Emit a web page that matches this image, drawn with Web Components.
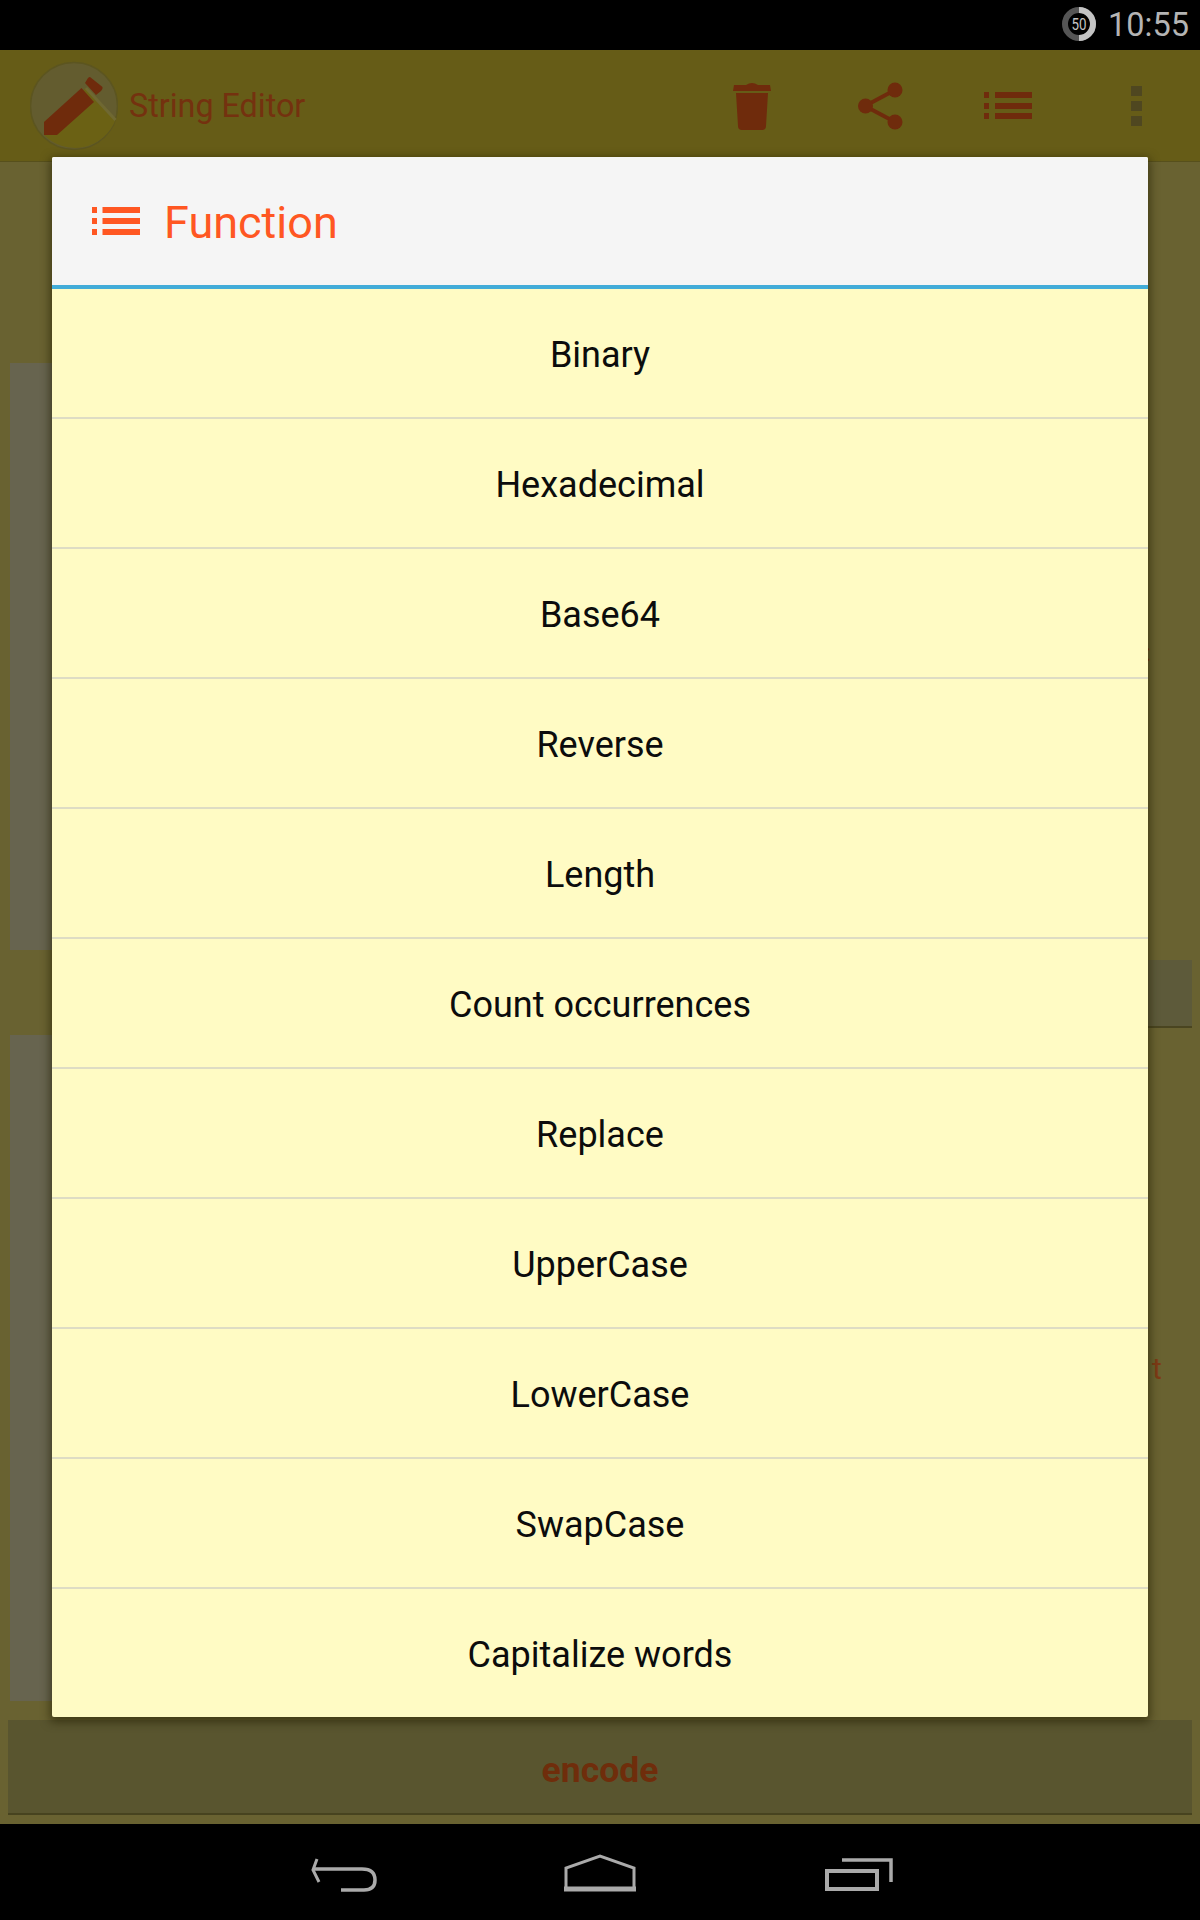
<!DOCTYPE html>
<html>
<head>
<meta charset="utf-8">
<title>String Editor</title>
<style>
    html, body { margin: 0; padding: 0; background: #000; }
    body { width: 1200px; height: 1920px; overflow: hidden; font-family: Roboto, "Liberation Sans", sans-serif; }
</style>
</head>
<body>
<app-screen>
    <status-bar slot="status" time="10:55"></status-bar>
    <app-bar slot="bar" title="String Editor"></app-bar>
    <editor-body slot="body"></editor-body>
    <nav-bar slot="nav"></nav-bar>
    <function-dialog slot="dialog" heading="Function">
        <option-row>Binary</option-row>
        <option-row>Hexadecimal</option-row>
        <option-row>Base64</option-row>
        <option-row>Reverse</option-row>
        <option-row>Length</option-row>
        <option-row>Count occurrences</option-row>
        <option-row>Replace</option-row>
        <option-row>UpperCase</option-row>
        <option-row>LowerCase</option-row>
        <option-row>SwapCase</option-row>
        <option-row>Capitalize words</option-row>
    </function-dialog>
</app-screen>

<script>
// Small helper so each component only declares its css and markup
class ShadowBase extends HTMLElement {
    constructor() {
        super();
        this.attachShadow({ mode: 'open' });
    }

    connectedCallback() {
        this.shadowRoot.innerHTML = `<style>${this.css()}</style>${this.html()}`;
    }

    css() { return ':host { display: block; }'; }
    html() { return '<slot></slot>'; }
}

class AppScreen extends ShadowBase {
    css() {
        return `
            :host { display: flex; flex-direction: column; position: relative; width: 1200px; height: 1920px; }
            ::slotted([slot="body"]) { flex: 1; }
        `;
    }
    html() {
        return `
            <slot name="status"></slot>
            <slot name="bar"></slot>
            <slot name="body"></slot>
            <slot name="nav"></slot>
            <slot name="dialog"></slot>
        `;
    }
}

class StatusBar extends ShadowBase {
    css() {
        return `
            :host { display: flex; align-items: center; justify-content: flex-end; gap: 12px; height: 50px; padding-right: 15px; background: #000; color: #b4b4b4; }
            svg { display: block; margin-top: -2px; }
            .time { font-size: 32.500px; line-height: 50px; width: 77px; white-space: nowrap; }
        `;
    }
    html() {
        return `
            <svg width="34" height="34" viewBox="0 0 34 34">
                <circle cx="17" cy="17" r="14" fill="none" stroke="#555" stroke-width="6"/>
                <path d="M17 3a14 14 0 0 1 0 28" fill="none" stroke="#c4c4c4" stroke-width="6"/>
                <text x="17" y="23" text-anchor="middle" font-size="16" fill="#c4c4c4" font-family="Roboto" textLength="15" lengthAdjust="spacingAndGlyphs">50</text>
            </svg>
            <span class="time">${this.getAttribute('time')}</span>
        `;
    }
}

class AppBar extends ShadowBase {
    css() {
        return `
            :host { display: flex; align-items: center; height: 112px; box-sizing: border-box; padding-left: 30px; background: #665c17; border-bottom: 1px solid #57501c; position: relative; }
            .logo { display: block; flex: none; margin-top: 1px; }
            .title { margin-left: 11px; font-size: 32.300px; color: #74310f; flex: 1; }
            .icons { display: flex; align-items: center; }
            svg { display: block; }
            .trash { margin-right: 87px; }
            .share { margin-right: 81px; }
            .list { margin-right: 99px; }
            .more { margin-right: 58px; }
        `;
    }
    html() {
        return `
            <svg class="logo" width="88" height="90" viewBox="30 61 88 90">
                <circle cx="74" cy="106" r="43.5" fill="#635c2f" stroke="#5c5520" stroke-width="1.5"/>
                <path d="M86 88 L115.500 120 A43.500 43.500 0 0 1 44 135 L44 122 Z" fill="#6b6114"/>
                <path d="M86 88 L115.500 120" stroke="#6f6832" stroke-width="3" fill="none"/>
                <path d="M44 122 L81.500 88 L94 102 L57 135 L44 135 Z" fill="#6f2b0c"/>
                <path d="M90 77 L102.500 87 Q103 89 101 91 L96 95 L85 83 L88 78 Q89 77 90 77 Z" fill="#6f2b0c"/>
            </svg>
            <span class="title">${this.getAttribute('title')}</span>
            <div class="icons">
                <svg class="trash" width="38" height="48" viewBox="0 0 38 48">
                    <path d="M13 3 Q19 -1 25 3 L37 3 L38 9 L0 9 L1 3 Z" fill="#6f2b0c"/>
                    <path d="M3 11 L35 11 L33 44 Q33 48 29 48 L9 48 Q5 48 5 44 Z" fill="#6f2b0c"/>
                </svg>
                <svg class="share" width="45" height="48" viewBox="0 0 45 48">
                    <path d="M37 8 L7 24 L37 40" fill="none" stroke="#6f2b0c" stroke-width="4"/>
                    <circle cx="37" cy="8" r="7.500" fill="#6f2b0c"/>
                    <circle cx="7.500" cy="24" r="7.500" fill="#6f2b0c"/>
                    <circle cx="37" cy="40" r="7.500" fill="#6f2b0c"/>
                </svg>
                <svg class="list" width="48" height="27" viewBox="0 0 48 27" fill="#6f2b0c">
                    <rect x="0" y="0" width="5" height="6"/><rect x="11" y="0" width="37" height="6"/>
                    <rect x="0" y="11" width="5" height="6"/><rect x="11" y="11" width="37" height="6"/>
                    <rect x="0" y="21" width="5" height="6"/><rect x="11" y="21" width="37" height="6"/>
                </svg>
                <svg class="more" width="11" height="40" viewBox="0 0 11 40" fill="#4f4720">
                    <rect width="11" height="10"/><rect y="15" width="11" height="10"/><rect y="30" width="11" height="10"/>
                </svg>
            </div>
        `;
    }
}

// The form behind the dialog, mostly covered by it
class EditorBody extends ShadowBase {
    css() {
        return `
            :host { display: flex; flex-direction: column; background: #696231; padding: 0 8px 9px; color: #7a3512; }
            .main { flex: 1; display: flex; gap: 8px; min-height: 0; }
            .left { flex: 1; display: flex; flex-direction: column; padding: 201px 0 19px 2px; }
            .panel { background: #67644f; }
            .panel.a { height: 587px; margin-bottom: 85px; }
            .panel.b { flex: 1; }
            .right { width: 80px; display: flex; flex-direction: column; align-items: flex-start; }
            .colon { margin: 476px 0 0 33px; font-size: 24px; line-height: 30px; height: 30px; }
            .small-btn { align-self: stretch; height: 66px; margin: 292px 0 0; background: #5d5a3a; border-bottom: 2px solid #4a4520; }
            .tail { margin: 321px 0 0 40px; font-size: 30px; line-height: 40px; color: #7d3a15; }
            .encode { height: 95px; line-height: 100px; text-align: center; background: #59552f; border-bottom: 2px solid #47431f; box-sizing: border-box; font-size: 35.500px; font-weight: 700; color: #6f2d0b; }
        `;
    }
    html() {
        return `
            <div class="main">
                <div class="left">
                    <div class="panel a"></div>
                    <div class="panel b"></div>
                </div>
                <div class="right">
                    <div class="colon">:</div>
                    <div class="small-btn"></div>
                    <div class="tail">t</div>
                </div>
            </div>
            <div class="encode">encode</div>
        `;
    }
}

class NavBar extends ShadowBase {
    css() {
        return `
            :host { display: block; height: 96px; background: #000; }
            svg { display: block; }
        `;
    }
    html() {
        return `
            <svg width="1200" height="96" viewBox="0 1824 1200 96" fill="none" stroke="#aaa">
                <path d="M317 1859 L313 1870 L319 1882" stroke-width="3"/>
                <path d="M314 1869 L362 1869 Q375 1869 375 1880 Q375 1890 364 1890 L341 1890" stroke-width="3.500"/>
                <path d="M566 1889 L566 1868 L600 1856 L634 1868 L634 1889" stroke-width="3"/>
                <path d="M564 1889 L636 1889" stroke-width="5"/>
                <path d="M842 1860 L891 1860 L891 1882" stroke-width="3.500"/>
                <rect x="827" y="1871" width="50" height="18" stroke-width="4"/>
            </svg>
        `;
    }
}

class FunctionDialog extends ShadowBase {
    css() {
        return `
            :host { position: absolute; left: 52px; top: 157px; width: 1096px; height: 1560px; display: flex; flex-direction: column; background: #fffbc4; box-shadow: 0 3px 10px 2px rgba(35, 30, 0, 0.6); border-radius: 2px; overflow: hidden; }
            header { flex: none; display: flex; align-items: center; gap: 24px; height: 128px; box-sizing: border-box; padding: 0 0 0 40px; background: #f5f5f5; color: #ff5722; }
            h2 { margin: 0; font-size: 45px; font-weight: 400; line-height: 1; position: relative; top: 1px; }
            svg { display: block; flex: none; }
            .rule { flex: none; height: 4px; background: #42acd8; }
            .list { flex: 1; min-height: 0; overflow: hidden; }
        `;
    }
    html() {
        return `
            <header>
                <svg width="48" height="28" viewBox="0 0 48 28" fill="#ff5722">
                    <rect y="0" width="5" height="6"/><rect x="10.500" y="0" width="37.500" height="6"/>
                    <rect y="11" width="5" height="6"/><rect x="10.500" y="11" width="37.500" height="6"/>
                    <rect y="22" width="5" height="6"/><rect x="10.500" y="22" width="37.500" height="6"/>
                </svg>
                <h2>${this.getAttribute('heading')}</h2>
            </header>
            <div class="rule"></div>
            <div class="list"><slot></slot></div>
        `;
    }
}

class OptionRow extends ShadowBase {
    css() {
        return `
            :host { display: flex; align-items: center; justify-content: center; box-sizing: border-box; height: 130px; padding-top: 3px; border-bottom: 2px solid #dedcc4; font-size: 36px; color: #0c0c0c; }
            :host(:last-child) { border-bottom: 0; padding-top: 1px; }
        `;
    }
}

customElements.define('app-screen', AppScreen);
customElements.define('status-bar', StatusBar);
customElements.define('app-bar', AppBar);
customElements.define('editor-body', EditorBody);
customElements.define('nav-bar', NavBar);
customElements.define('function-dialog', FunctionDialog);
customElements.define('option-row', OptionRow);
</script>
</body>
</html>
